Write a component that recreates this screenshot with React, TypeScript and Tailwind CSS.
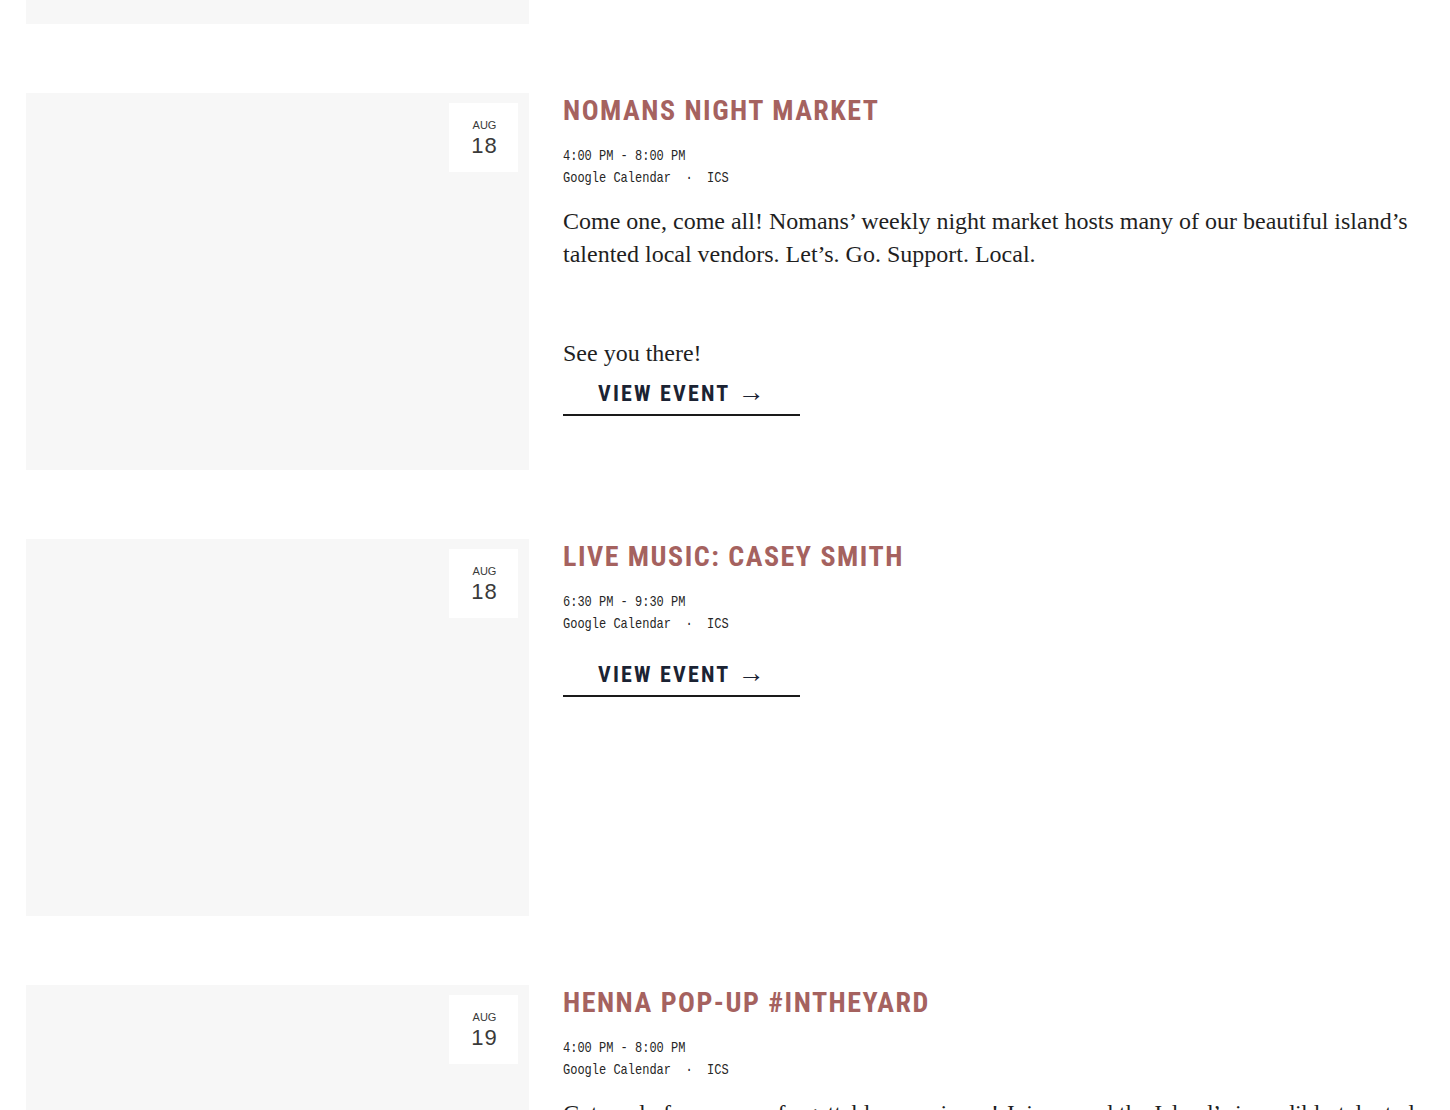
import React from "react";

const titleFont = {
  fontFamily: '"Liberation Sans Narrow", "Roboto Condensed", "Liberation Sans", sans-serif',
};

type Ev = {
  month: string;
  day: string;
  title: string;
  time: string;
};

function DateBox({ month, day }: { month: string; day: string }) {
  return (
    <div className="absolute top-[10px] right-[11px] w-[69px] h-[69px] bg-white flex flex-col items-center pt-[15px] text-[#3a3a3a] font-['Liberation_Sans',sans-serif]">
      <div className="text-[11px] leading-[14px] ml-[2px]">{month}</div>
      <div className="text-[22px] leading-[26px] mt-[1px] ml-[2px] tracking-[1px]">{day}</div>
    </div>
  );
}

function Meta({ time }: { time: string }) {
  return (
    <div className="font-['Liberation_Mono',monospace] text-[15px] leading-[22px] text-[#262626] mt-[18px] whitespace-pre">
      <div className="inline-block origin-left scale-x-[0.8]">{time}</div>
      <div className="block">
        <span className="inline-block origin-left scale-x-[0.8]">{"Google Calendar  ·  ICS"}</span>
      </div>
    </div>
  );
}

function ViewButton({ mt }: { mt: string }) {
  return (
    <div className={mt}>
      <a
        href="#"
        style={titleFont}
        className="inline-flex items-center w-[237px] pl-[35px] pb-[7px] border-b-2 border-[#1a1a1a] text-[22px] leading-[26px] font-bold tracking-[2.2px] text-[#1b2333]"
      >
        <span>VIEW EVENT</span>
        <span className="font-normal font-['Liberation_Serif',serif] tracking-normal text-[27px] leading-[26px] ml-[7px] -mt-[3px]">→</span>
      </a>
    </div>
  );
}

function Row({ ev, children }: { ev: Ev; children?: React.ReactNode }) {
  return (
    <div className="flex gap-[34px]">
      <div className="relative w-[503px] h-[377px] shrink-0 bg-[#f7f7f7]">
        <DateBox month={ev.month} day={ev.day} />
      </div>
      <div className="flex-1 min-w-0">
        <h2
          style={titleFont}
          className="text-[28px] leading-[1.2] font-bold tracking-[1.5px] text-[#a5625f] mt-[1px]"
        >
          {ev.title}
        </h2>
        <Meta time={ev.time} />
        {children}
      </div>
    </div>
  );
}

export default function App() {
  return (
    <div className="bg-white min-h-[1110px] px-[26px] overflow-hidden">
      <div className="w-[503px] h-[24px] bg-[#f7f7f7]" />
      <div className="mt-[69px] flex flex-col gap-[69px]">
        <Row ev={{ month: "AUG", day: "18", title: "NOMANS NIGHT MARKET", time: "4:00 PM - 8:00 PM" }}>
          <div className="mt-[15px] font-['Liberation_Serif',serif] text-[24px] leading-[33px] text-[#1f1f1f]">
            <p>
              Come one, come all! Nomans’ weekly night market hosts many of our beautiful island’s talented local vendors. Let’s. Go. Support. Local.
            </p>
            <p className="mt-[66px]">See you there!</p>
          </div>
          <ViewButton mt="mt-[11px]" />
        </Row>
        <Row ev={{ month: "AUG", day: "18", title: "LIVE MUSIC: CASEY SMITH", time: "6:30 PM - 9:30 PM" }}>
          <ViewButton mt="mt-[26px]" />
        </Row>
        <Row ev={{ month: "AUG", day: "19", title: "HENNA POP-UP #INTHEYARD", time: "4:00 PM - 8:00 PM" }}>
          <div className="mt-[15px] font-['Liberation_Serif',serif] text-[24px] leading-[33px] text-[#1f1f1f]">
            <p>
              Get ready for some unforgettable experience! Join us and the Island’s incredibly talented henna artists in the yard.
            </p>
          </div>
        </Row>
      </div>
    </div>
  );
}
